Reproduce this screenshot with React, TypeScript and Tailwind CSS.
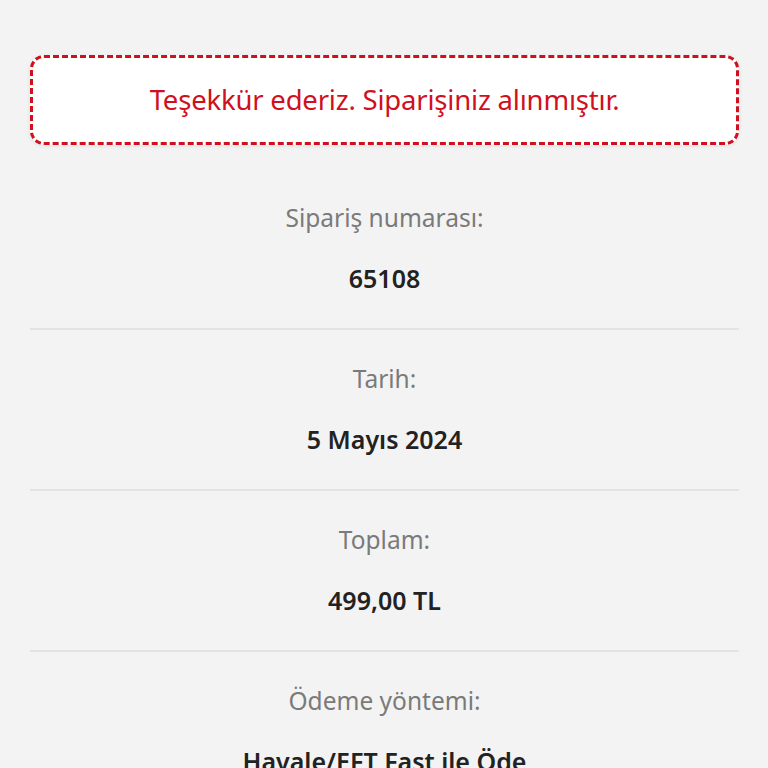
import React from "react";

const items = [
  { label: "Sipariş numarası:", value: "65108" },
  { label: "Tarih:", value: "5 Mayıs 2024" },
  { label: "Toplam:", value: "499,00 TL" },
  { label: "Ödeme yöntemi:", value: "Havale/EFT Fast ile Öde" },
];

export default function App() {
  return (
    <div
      className="h-[768px] overflow-hidden bg-[#f3f3f3] pl-[30px] pr-[29px] pt-[55px]"
      style={{ fontFamily: '"Noto Sans", "Open Sans", sans-serif' }}
    >
      <div className="flex h-[90px] items-center justify-center rounded-[14px] border-[3px] border-dashed border-[#d0101e] bg-white shadow-[0_1px_4px_rgba(0,0,0,0.08)]">
        <p className="text-[27.5px] leading-[32px] tracking-[-0.2px] text-[#d0101e]">
          Teşekkür ederiz. Siparişiniz alınmıştır.
        </p>
      </div>
      <div className="mt-[24px]">
        {items.map((it) => (
          <div
            key={it.label}
            className="flex flex-col items-center border-b-2 border-[#e3e3e3] pt-[33px] pb-[34px]"
          >
            <div className="h-[32px] text-[24.5px] leading-[32px] text-[#7a7a7a]">
              {it.label}
            </div>
            <div className="mt-[28px] h-[32px] text-[25px] font-semibold leading-[32px] text-[#222]">
              {it.value}
            </div>
          </div>
        ))}
      </div>
    </div>
  );
}
